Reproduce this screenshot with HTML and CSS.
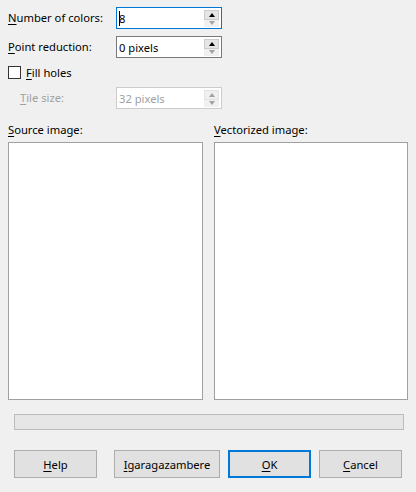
FILE: index.html
```html
<!DOCTYPE html>
<html>
<head>
<meta charset="utf-8">
<link rel="stylesheet" href="styles.css">
</head>
<body>
<div class="dialog">
  <div class="field row1">
    <label class="lbl"><u>N</u>umber of colors:</label>
    <div class="spin focus">
      <span class="val"><span class="caret"></span>8</span>
      <span class="btns"><span class="b up"><i class="tri-up"></i></span><span class="b dn"><i class="tri-dn dim"></i></span></span>
    </div>
  </div>
  <div class="field row2">
    <label class="lbl"><u>P</u>oint reduction:</label>
    <div class="spin">
      <span class="val">0 pixels</span>
      <span class="btns"><span class="b up"><i class="tri-up"></i></span><span class="b dn"><i class="tri-dn dim"></i></span></span>
    </div>
  </div>
  <div class="check">
    <span class="box"></span>
    <span><u>F</u>ill holes</span>
  </div>
  <div class="field row4 disabled">
    <label class="lbl indent"><u>T</u>ile size:</label>
    <div class="spin">
      <span class="val">32 pixels</span>
      <span class="btns"><span class="b up"><i class="tri-up dim"></i></span><span class="b dn"><i class="tri-dn dim"></i></span></span>
    </div>
  </div>
  <div class="images">
    <div class="col">
      <div class="cap"><u>S</u>ource image:</div>
      <div class="pane"></div>
    </div>
    <div class="col">
      <div class="cap"><u>V</u>ectorized image:</div>
      <div class="pane"></div>
    </div>
  </div>
  <div class="progress"></div>
  <div class="buttons">
    <button class="btn"><u>H</u>elp</button>
    <button class="btn wide"><u>I</u>garagazambere</button>
    <button class="btn default"><u>O</u>K</button>
    <button class="btn"><u>C</u>ancel</button>
  </div>
</div>
</body>
</html>
```
FILE: styles.css
```css
* { box-sizing: border-box; }
html, body { margin: 0; padding: 0; }
body {
  background: #f0f0f0;
  font-family: "Noto Sans", "Open Sans", sans-serif;
  font-size: 11.2px;
  color: #000;
  width: 416px;
  height: 492px;
  overflow: hidden;
}
u { text-decoration-thickness: 1px; text-underline-offset: 2px; }
.dialog { padding: 7px 0 0 8px; }
.field { display: flex; align-items: center; height: 22px; }
.row2 { margin-top: 7px; }
.row4 { margin-top: 4px; }
.lbl { width: 108px; line-height: 16px; }
.lbl.indent { padding-left: 12px; }
.spin {
  width: 106px; height: 22px;
  background: #fff;
  border: 1px solid #7a7a7a;
  display: flex; align-items: stretch;
  padding: 2px 2px 1px 2px;
}
.spin.focus { border-color: #0078d7; }
.val { flex: 1; display: flex; align-items: center; line-height: 16px; position: relative; }
.caret { display: inline-block; width: 1px; height: 15px; background: #000; margin-right: -1px; }
.btns { width: 15px; display: flex; flex-direction: column; }
.b { flex: 1; display: flex; align-items: center; justify-content: center; }
.b.up { background: #e5e5e5; border: 1px solid #cccccc; }
.b.dn { background: #f0f0f0; }
.tri-up { width: 0; height: 0; border-left: 3.5px solid transparent; border-right: 3.5px solid transparent; border-bottom: 4px solid #000; }
.tri-dn { width: 0; height: 0; border-left: 3.5px solid transparent; border-right: 3.5px solid transparent; border-top: 4px solid #000; }
.tri-up.dim { border-bottom-color: #a3a3a3; }
.tri-dn.dim { border-top-color: #a3a3a3; }
.disabled .lbl { color: #a0a0a0; }
.disabled .spin { border-color: #cccccc; color: #a0a0a0; }
.disabled .b.up { background: #f0f0f0; border-color: #e3e3e3; }
.check { display: flex; align-items: center; height: 22px; margin-top: 3px; gap: 5px; }
.box { width: 13px; height: 13px; border: 1px solid #333; background: #fff; }
.images { display: flex; gap: 11px; margin-top: 13px; }
.col { display: flex; flex-direction: column; }
.col:first-child .pane { width: 195px; }
.col:last-child .pane { width: 194px; }
.cap { height: 17px; line-height: 16px; margin-bottom: 3px; }
.pane { height: 258px; background: #fff; border: 1px solid #a0a0a0; }
.progress {
  margin: 14px 0 0 6px;
  width: 390px; height: 16px;
  background: #e6e6e6; border: 1px solid #bcbcbc;
}
.buttons { display: flex; margin: 20px 0 0 6px; }
.btn {
  font: inherit; color: #000;
  height: 28px; width: 83px;
  background: #e1e1e1; border: 1px solid #adadad;
  padding: 0; margin: 0 8px 0 0;
}
.btn.wide { width: 106px; margin-left: 9px; }
.btn.default { border: 2px solid #0078d7; }
```
